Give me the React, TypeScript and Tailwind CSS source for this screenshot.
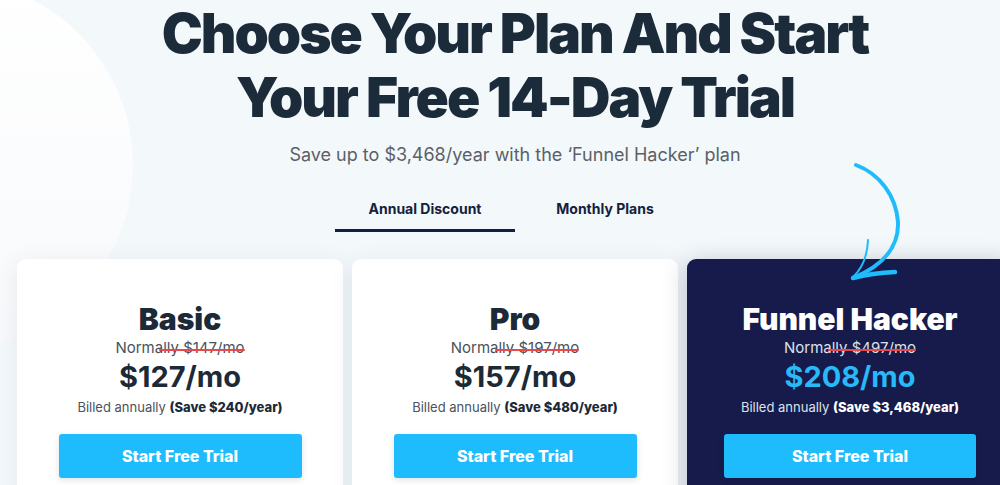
const plans = [
  {
    name: 'Basic',
    normally: '$147/mo',
    price: '$127/mo',
    save: '(Save $240/year)',
    featured: false,
  },
  {
    name: 'Pro',
    normally: '$197/mo',
    price: '$157/mo',
    save: '(Save $480/year)',
    featured: false,
  },
  {
    name: 'Funnel Hacker',
    normally: '$497/mo',
    price: '$208/mo',
    save: '(Save $3,468/year)',
    featured: true,
  },
];

function PlanCard({ plan }: { plan: (typeof plans)[number] }) {
  const dark = plan.featured;
  return (
    <div
      className={`flex h-[260px] w-[326px] shrink-0 flex-col items-center rounded-[9px] pt-[42px] ${
        dark
          ? 'bg-[#161b4b] shadow-[0_4px_24px_rgba(22,27,75,0.25)]'
          : 'bg-white shadow-[0_4px_24px_rgba(30,50,80,0.08)]'
      }`}
    >
      <h2
        className={`text-[30px] leading-[36px] font-black ${
          dark ? 'text-white' : 'text-[#1c2a38]'
        }`}
      >
        {plan.name}
      </h2>
      <p
        className={`relative mt-px text-[15px] leading-[20px] ${
          dark ? 'text-[#dde1ec]' : 'text-[#4a525c]'
        }`}
      >
        Normally {plan.normally}
        <span className="absolute top-[11px] right-0 left-[44px] h-[1.5px] rounded-full bg-[#e8474b]" />
      </p>
      <p
        className={`mt-[2px] text-[29px] leading-[34px] font-bold ${
          dark ? 'text-[#27b9f8]' : 'text-[#1c2a38]'
        }`}
      >
        {plan.price}
      </p>
      <p
        className={`mt-[3px] text-[13px] leading-[20px] ${
          dark ? 'text-[#dde1ec]' : 'text-[#4a525c]'
        }`}
      >
        Billed annually{' '}
        <span className={`font-extrabold ${dark ? 'text-white' : 'text-[#1c2a38]'}`}>
          {plan.save}
        </span>
      </p>
      <button
        type="button"
        className={`mt-[17px] h-[44px] rounded-[3px] bg-[#1ebcfd] text-[16px] font-extrabold text-white shadow-[0_2px_6px_rgba(0,0,0,0.12)] ${
          dark ? 'w-[252px]' : 'w-[243px]'
        }`}
      >
        Start Free Trial
      </button>
    </div>
  );
}

export default function App() {
  return (
    <div className="relative h-[485px] w-[1000px] overflow-hidden bg-[#f3f8fb] font-['Inter',sans-serif]">
      {/* soft white disc in the top-left corner */}
      <div className="absolute top-[-21px] left-[-239px] h-[372px] w-[372px] rounded-full bg-gradient-to-b from-white to-[#f7f9fb]" />

      <div className="relative flex w-[1030px] flex-col items-center pt-px">
        <h1 className="text-center text-[55px] leading-[64px] font-black tracking-[-2px] text-[#1c2b39]">
          Choose Your Plan And Start
          <br />
          Your Free 14-Day Trial
        </h1>
        <p className="mt-[14px] text-[18px] leading-[24px] text-[#5b6068]">
          Save up to $3,468/year with the ‘Funnel Hacker’ plan
        </p>

        <div className="mt-[32px] flex">
          <button
            type="button"
            className="w-[180px] border-b-[3px] border-[#0e2341] pb-[10px] text-[14px] leading-[20px] font-bold text-[#14213d]"
          >
            Annual Discount
          </button>
          <button
            type="button"
            className="w-[180px] border-b-[3px] border-transparent pb-[10px] text-[14px] leading-[20px] font-bold text-[#14213d]"
          >
            Monthly Plans
          </button>
        </div>

        <div className="mt-[27px] flex gap-[9px]">
          {plans.map((p) => (
            <PlanCard key={p.name} plan={p} />
          ))}
        </div>
      </div>

      {/* hand-drawn arrow pointing at the featured plan */}
      <svg
        className="absolute top-0 left-0"
        width="1000"
        height="485"
        viewBox="0 0 1000 485"
        fill="none"
      >
        <path
          d="M856 165 C 880 174 896 196 898 222 C 899 245 885 265 853 278"
          stroke="#1ebcfd"
          strokeWidth="4"
          strokeLinecap="round"
        />
        <path
          d="M853 278 Q 872 273 895 272"
          stroke="#1ebcfd"
          strokeWidth="4.5"
          strokeLinecap="round"
        />
        <path
          d="M868 240 Q 867 264 853 277"
          stroke="#1ebcfd"
          strokeWidth="2"
          strokeLinecap="round"
        />
      </svg>
    </div>
  );
}
